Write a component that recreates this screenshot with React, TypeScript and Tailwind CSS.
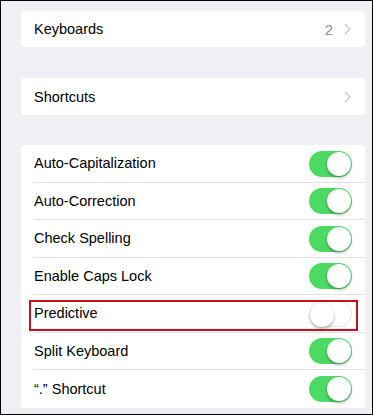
import type { ReactNode } from "react";

// ── Toggle ────────────────────────────────────────────────────────────────────
function Toggle({ on }: { on: boolean }) {
  return (
    <div
      className={`relative w-[43px] h-[26px] rounded-full ${
        on ? "bg-[#4cd964]" : "bg-white border border-[#e3e3e8]"
      }`}
    >
      <div
        className={`absolute top-[1px] w-[24px] h-[24px] rounded-full bg-white shadow-[0_2px_3px_rgba(0,0,0,0.3)] ${
          on ? "right-[1px]" : "left-0 top-0"
        }`}
      />
    </div>
  );
}

// ── Chevron ──────────────────────────────────────────────────────────────────
function Chevron() {
  return (
    <svg width="7" height="12" viewBox="0 0 7 12" fill="none">
      <path d="M1 1l5 5-5 5" stroke="#c7c7cc" strokeWidth="1.4" />
    </svg>
  );
}

// ── Row ──────────────────────────────────────────────────────────────────────
function Row({ label, children, last }: { label: string; children: ReactNode; last?: boolean }) {
  return (
    <div className="relative h-[37.5px] flex items-center pl-[13px]">
      <div className={`flex-1 h-full flex items-center justify-between pr-[13px] ${last ? "" : "border-b border-[#e2e2e6]"}`}>
        <span className="text-[14.5px] text-black pt-[2px]">{label}</span>
        <div className="pt-[1px]">{children}</div>
      </div>
    </div>
  );
}

const switches: [string, boolean][] = [
  ["Auto-Capitalization", true],
  ["Auto-Correction", true],
  ["Check Spelling", true],
  ["Enable Caps Lock", true],
  ["Predictive", false],
  ["Split Keyboard", true],
  ["\u201c.\u201d Shortcut", true],
];

export default function App() {
  return (
    <div
      className="w-[373px] h-[415px] bg-[#efeff4] border border-black pt-[10px] pl-[20px] pr-[7px] overflow-hidden"
      style={{ fontFamily: '"Liberation Sans", Arial, sans-serif' }}
    >
      {/* Keyboards */}
      <div className="bg-white rounded-[4px] h-[36px] flex items-center justify-between pl-[13px] pr-[14px]">
        <span className="text-[14.5px] text-black pt-[2px]">Keyboards</span>
        <div className="flex items-center gap-[11px]">
          <span className="text-[15px] text-[#8e8e93] pt-[2px]">2</span>
          <Chevron />
        </div>
      </div>

      {/* Shortcuts */}
      <div className="mt-[31px] bg-white rounded-[4px] h-[37px] flex items-center justify-between pl-[13px] pr-[14px]">
        <span className="text-[14.5px] text-black pt-[2px]">Shortcuts</span>
        <Chevron />
      </div>

      {/* Switches */}
      <div className="mt-[30px] bg-white rounded-[4px]">
        {switches.map(([label, on], i) => (
          <div key={label} className="relative">
            <Row label={label} last={i === switches.length - 1}>
              <Toggle on={on} />
            </Row>
            {label === "Predictive" && (
              <div className="absolute left-[8px] right-[7px] top-[5px] bottom-[2px] border-2 border-[#c8101a] pointer-events-none" />
            )}
          </div>
        ))}
      </div>
    </div>
  );
}
